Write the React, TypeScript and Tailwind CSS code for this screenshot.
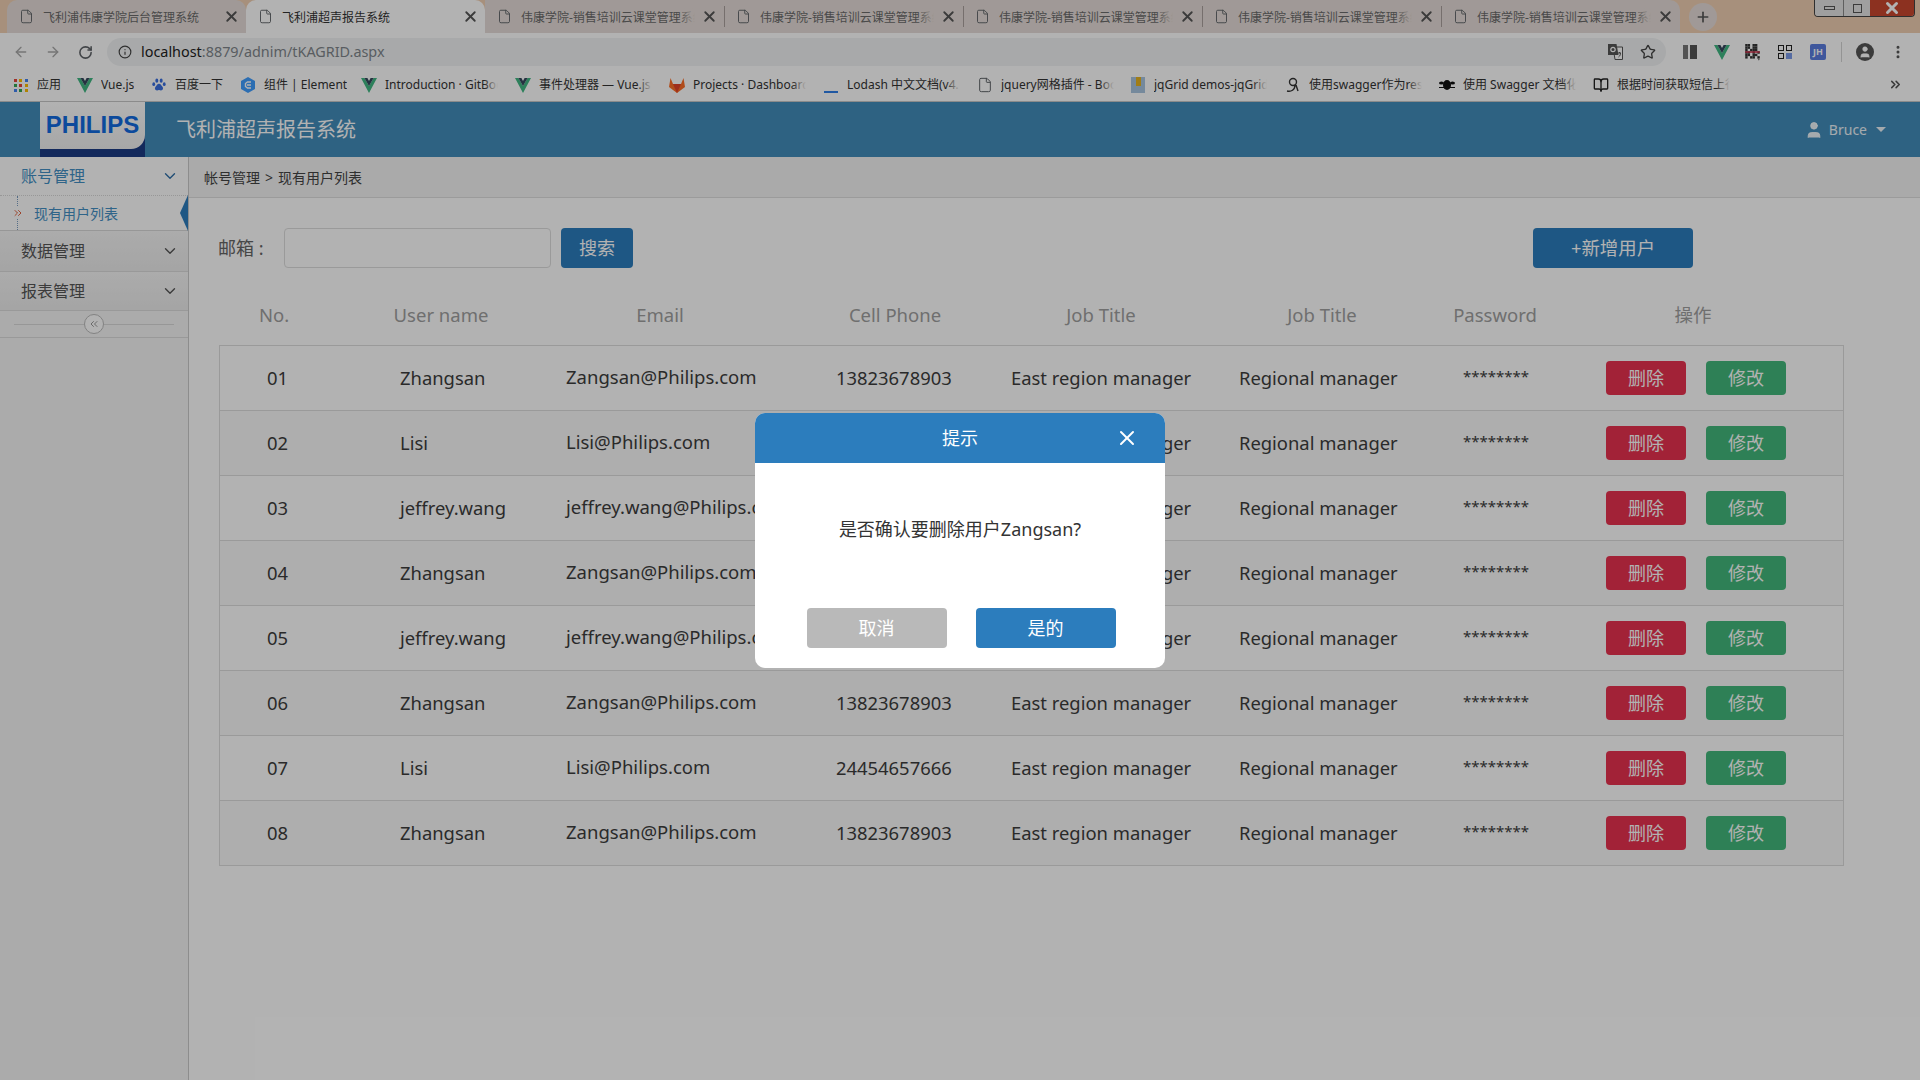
import React from 'react';
import { ArrowLeft, ArrowRight, ChevronDown, ChevronsLeft, ChevronsRight, File, Info, MoreVertical, Plus, RotateCw, Star, User, X, BookOpen } from 'lucide-react';

const font = { fontFamily: '"Noto Sans", "Noto Sans CJK SC", sans-serif' };

const users = [
  ['01', 'Zhangsan', 'Zangsan@Philips.com', '13823678903'],
  ['02', 'Lisi', 'Lisi@Philips.com', '24454657666'],
  ['03', 'jeffrey.wang', 'jeffrey.wang@Philips.com', '13823678903'],
  ['04', 'Zhangsan', 'Zangsan@Philips.com', '13823678903'],
  ['05', 'jeffrey.wang', 'jeffrey.wang@Philips.com', '13823678903'],
  ['06', 'Zhangsan', 'Zangsan@Philips.com', '13823678903'],
  ['07', 'Lisi', 'Lisi@Philips.com', '24454657666'],
  ['08', 'Zhangsan', 'Zangsan@Philips.com', '13823678903'],
];

const tabs = ['飞利浦伟康学院后台管理系统', '飞利浦超声报告系统', '伟康学院-销售培训云课堂管理系统', '伟康学院-销售培训云课堂管理系统', '伟康学院-销售培训云课堂管理系统', '伟康学院-销售培训云课堂管理系统', '伟康学院-销售培训云课堂管理系统'];

const VueIcon = () => (
  <svg width="16" height="15" viewBox="0 0 16 15" className="shrink-0">
    <path d="M0 0h3.4L8 8l4.6-8H16L8 15z" fill="#41b883" />
    <path d="M3.4 0h3L8 3l1.6-3h3L8 8z" fill="#35495e" />
  </svg>
);

const AppsIcon = () => (
  <div className="grid grid-cols-3 gap-[2px] w-[14px] shrink-0">
    {['#e8453c', '#fbbc05', '#4285f4', '#34a853', '#e8453c', '#fbbc05', '#4285f4', '#34a853', '#fbbc05'].map((c, i) => (
      <span key={i} className="w-[3px] h-[3px]" style={{ backgroundColor: c }} />
    ))}
  </div>
);

const PawIcon = () => (
  <svg width="14" height="16" viewBox="0 0 16 16" className="shrink-0" fill="#3a6fe0">
    <ellipse cx="5.5" cy="3" rx="1.7" ry="2.4" />
    <ellipse cx="10.5" cy="3" rx="1.7" ry="2.4" />
    <ellipse cx="2" cy="7" rx="1.6" ry="2.2" />
    <ellipse cx="14" cy="7" rx="1.6" ry="2.2" />
    <path d="M8 6.5c-2 0-2.5 2-4 3.5-1.5 2 0 4.500 2 4.200 1-.2 1.300-.5 2-.5s1 .3 2 .5c2 .3 3.500-2.200 2-4.200C10.500 8.500 10 6.500 8 6.500z" />
  </svg>
);

const ElementIcon = () => (
  <svg width="14" height="16" viewBox="0 0 14 16" className="shrink-0">
    <path d="M7 0l7 4v8l-7 4-7-4V4z" fill="#409eff" />
    <path d="M10 5H6.500L4.500 6.500v3L6.500 11H10M6 8h4" stroke="#fff" strokeWidth="1.400" fill="none" />
  </svg>
);

const GitlabIcon = () => (
  <svg width="16" height="15" viewBox="0 0 16 15" className="shrink-0">
    <path d="M8 15L0 9l1.500-9L4 6h8l2.500-6L16 9z" fill="#fc6d26" />
    <path d="M8 15L4 6h8z" fill="#e24329" />
  </svg>
);

const LineIcon = () => <div className="w-[14px] h-[2px] bg-[#2f7fe8] mt-[13px] shrink-0" />;
const FileIcon = () => <File className="w-[16px] h-[16px] text-[#5f6368] shrink-0" strokeWidth={1.500} />;
const JqIcon = () => (
  <div className="w-[14px] h-[16px] bg-[#a8c4e0] flex justify-center shrink-0">
    <div className="w-[5px] h-[9px] bg-[#e6b422]" />
  </div>
);
const SwaggerIcon = () => (
  <svg width="16" height="16" viewBox="0 0 16 16" fill="none" stroke="#333" strokeWidth="1.400" className="shrink-0">
    <circle cx="8" cy="5" r="3.500" />
    <path d="M2 14c4 1 8-1 8-6M11 8l2 6" />
  </svg>
);
const BeeIcon = () => (
  <svg width="16" height="12" viewBox="0 0 16 12" fill="#111" className="shrink-0">
    <ellipse cx="8" cy="6" rx="4" ry="5" />
    <ellipse cx="2.500" cy="4" rx="2.500" ry="1.500" />
    <ellipse cx="13.500" cy="4" rx="2.500" ry="1.500" />
    <path d="M0 8h16v1H0z" />
  </svg>
);
const ManualIcon = () => <BookOpen className="w-[16px] h-[16px] text-[#222] shrink-0" strokeWidth={2} />;

const TranslateIcon = () => (
  <svg width="15" height="16" viewBox="0 0 15 16" className="ml-auto shrink-0">
    <path d="M5 3h9.500v12.500H7z" fill="#fff" stroke="#555" />
    <path d="M0 0h8.500l2 11H0z" fill="#555" />
    <circle cx="5" cy="5.500" r="2.200" fill="none" stroke="#fff" strokeWidth="1.200" />
    <path d="M10 9h3M11.500 8v1M10.500 13c1.500-1 2-2.500 2-4" stroke="#555" strokeWidth="1" fill="none" />
  </svg>
);

const qrCells = [1, 1, 0, 1, 1, 0, 1, 1, 0, 1, 1, 0, 1, 0, 1, 1, 1, 0, 1, 1, 0, 1, 0, 1, 1, 1, 0, 1, 1, 0, 1, 0, 1, 1, 0, 1];

const QrIcon = () => (
  <svg width="15" height="17" viewBox="0 0 12 14" className="shrink-0">
    {qrCells.map((on, i) => on ? <rect key={i} x={(i % 6) * 2} y={Math.floor(i / 6) * 2} width="2" height="2" fill="#333" /> : null)}
    <rect y="6" width="12" height="1.200" fill="#d0304a" />
    <path d="M10 11l2 2-1 .5z" fill="#666" />
  </svg>
);

const bookmarks: { w: string; clip: boolean; icon: React.ReactNode; label: string }[] = [
  { w: 'w-[64px]', clip: false, icon: <AppsIcon />, label: '应用' },
  { w: 'w-[74px]', clip: false, icon: <VueIcon />, label: 'Vue.js' },
  { w: 'w-[89px]', clip: false, icon: <PawIcon />, label: '百度一下' },
  { w: 'w-[121px]', clip: false, icon: <ElementIcon />, label: '组件 | Element' },
  { w: 'w-[154px]', clip: true, icon: <VueIcon />, label: 'Introduction · GitBook' },
  { w: 'w-[154px]', clip: true, icon: <VueIcon />, label: '事件处理器 — Vue.js' },
  { w: 'w-[154px]', clip: true, icon: <GitlabIcon />, label: 'Projects · Dashboard' },
  { w: 'w-[154px]', clip: true, icon: <LineIcon />, label: 'Lodash 中文文档(v4.16)' },
  { w: 'w-[153px]', clip: true, icon: <FileIcon />, label: 'jquery网格插件 - Bootstrap' },
  { w: 'w-[155px]', clip: true, icon: <JqIcon />, label: 'jqGrid demos-jqGrid' },
  { w: 'w-[154px]', clip: true, icon: <SwaggerIcon />, label: '使用swagger作为restful' },
  { w: 'w-[154px]', clip: true, icon: <BeeIcon />, label: '使用 Swagger 文档化' },
  { w: 'w-[154px]', clip: true, icon: <ManualIcon />, label: '根据时间获取短信上行记录' },
];

const BrowserChrome = () => (
  <div className="shrink-0">
    {/* tab strip */}
    <div className="relative h-[33px] bg-[#f0cfb2] flex pl-[7px] overflow-hidden">
      {tabs.map((t, i) => (
        <div
          key={i}
          className={`relative w-[239px] h-[33px] flex items-center pl-[12px] text-[12px] ${i === 1 ? 'bg-white rounded-t-[10px] text-[#333]' : 'bg-[#e5dcd8] text-[#6a6a6a]'} ${i === 0 ? 'rounded-t-[10px]' : ''} ${i === 6 ? 'rounded-tr-[10px]' : ''}`}
        >
          <File className="w-[15px] h-[15px] text-[#5f6368] shrink-0" strokeWidth={1.500} />
          <div className="relative ml-[9px] w-[174px] overflow-hidden pt-[2px]">
            <span className="whitespace-nowrap">{t}</span>
            {i > 1 && <div className="absolute right-0 top-0 bottom-0 w-[16px] bg-gradient-to-r from-transparent to-[#e5dcd8]" />}
          </div>
          <X className="w-[17px] h-[17px] ml-[6px] text-[#555] shrink-0" strokeWidth={2.600} />
          {i > 2 && <div className="absolute left-0 top-[6px] h-[21px] w-px bg-[#a9a09c]" />}
        </div>
      ))}
      <div className="ml-[9px] mt-[3px] w-[28px] h-[28px] rounded-full bg-[#e5dcd8] flex items-center justify-center">
        <Plus className="w-[16px] h-[16px] text-[#555]" strokeWidth={2.500} />
      </div>
      <div className="absolute right-[5px] top-0 w-[101px] h-[17px] flex rounded-b-[4px] overflow-hidden border border-t-0 border-[#444]">
        <div className="w-[28px] bg-[#e4e4e4] flex items-center justify-center">
          <div className="w-[11px] h-[4px] border border-[#555]" />
        </div>
        <div className="w-[27px] bg-[#e4e4e4] border-l border-[#888] flex items-center justify-center">
          <div className="w-[9px] h-[9px] border border-[#555]" />
        </div>
        <div className="flex-1 bg-[#c9472e] flex items-center justify-center">
          <X className="w-[18px] h-[18px] text-white" strokeWidth={4} />
        </div>
      </div>
    </div>
    {/* address bar */}
    <div className="h-[34px] pt-[4px] bg-white flex items-center text-[#5f6368]">
      <ArrowLeft className="ml-[13px] w-[16px] h-[16px] text-[#a8a8a8]" strokeWidth={2} />
      <ArrowRight className="ml-[16px] w-[16px] h-[16px] text-[#a8a8a8]" strokeWidth={2} />
      <RotateCw className="ml-[17px] w-[15px] h-[15px] text-[#5f6368]" strokeWidth={2.500} />
      <div className="ml-[14px] w-[1559px] h-[28px] rounded-full bg-[#f1f3f4] flex items-center pl-[11px]">
        <Info className="w-[14px] h-[14px] text-[#444]" strokeWidth={2} />
        <span className="ml-[9px] text-[14.400px] text-[#222]">localhost<span className="text-[#80868b]">:8879/adnim/tKAGRID.aspx</span></span>
        <TranslateIcon />
        <Star className="ml-[17px] mr-[10px] w-[16px] h-[16px] text-[#444]" strokeWidth={2} />
      </div>
      <div className="ml-[17px] flex gap-[2px] w-[14px] h-[14px] shrink-0">
        <div className="w-[5px] bg-[#777]" />
        <div className="w-[8px] bg-[#555]" />
      </div>
      <div className="ml-[17px]"><VueIcon /></div>
      <div className="ml-[15px]"><QrIcon /></div>
      <div className="ml-[18px] grid grid-cols-2 gap-[2px] w-[14px] shrink-0">
        <span className="w-[6px] h-[6px] border border-[#222]" />
        <span className="w-[6px] h-[6px] border border-[#222]" />
        <span className="w-[6px] h-[6px] border border-[#222]" />
        <span className="w-[6px] h-[6px] bg-[#7c9be8]" />
      </div>
      <div className="ml-[18px] w-[16px] h-[16px] rounded-[2px] bg-[#5b7de0] text-white text-[9px] font-bold flex items-center justify-center">JH</div>
      <div className="ml-[15px] h-[20px] w-px bg-[#d5d5d5]" />
      <div className="ml-[14px] w-[18px] h-[18px] rounded-full bg-[#555] flex items-center justify-center shrink-0">
        <User className="w-[14px] h-[14px] text-white" fill="white" strokeWidth={1} />
      </div>
      <MoreVertical className="ml-[16px] w-[16px] h-[16px] text-[#555]" strokeWidth={2.500} />
    </div>
    {/* bookmarks */}
    <div className="relative h-[35px] pt-[2px] bg-white border-b border-[#c8c8c8] flex items-center pl-[13px] text-[12px] text-[#333]">
      {bookmarks.map((b) => (
        <div key={b.label} className={`${b.w} shrink-0 flex items-center`}>
          <div className="w-[16px] flex justify-center shrink-0">{b.icon}</div>
          <div className={`relative ml-[8px] overflow-hidden whitespace-nowrap ${b.clip ? 'w-[113px]' : ''}`}>
            {b.label}
            {b.clip && <div className="absolute right-0 top-0 bottom-0 w-[14px] bg-gradient-to-r from-transparent to-white" />}
          </div>
        </div>
      ))}
      <ChevronsRight className="absolute right-[17px] top-[10px] w-[15px] h-[15px] text-[#555]" strokeWidth={2.500} />
    </div>
  </div>
);

const AppHeader = () => (
  <div className="shrink-0 h-[55px] bg-[#438dbb] flex items-stretch">
    <div className="ml-[40px] w-[105px] bg-[#1c3c84]">
      <div className="h-[47px] bg-gradient-to-b from-white to-[#f0f0f0] rounded-br-[14px] flex justify-center">
        <span className="mt-[7px] text-[#126be0] text-[24px] leading-[32px] font-bold" style={{ fontFamily: '"Liberation Sans", sans-serif' }}>PHILIPS</span>
      </div>
    </div>
    <div className="ml-[31px] self-center text-[20px] text-white">飞利浦超声报告系统</div>
    <div className="ml-auto mr-[34px] self-center flex items-center text-[14px] text-white/90">
      <User className="w-[20px] h-[20px] -mx-[3px]" fill="currentColor" strokeWidth={1} />
      <span className="ml-[8px]">Bruce</span>
      <div className="ml-[9px] w-0 h-0 border-x-[5px] border-x-transparent border-t-[5px] border-t-white/90" />
    </div>
  </div>
);

const Sidebar = () => (
  <div className="shrink-0 w-[189px] border-r border-[#cbcbcb] bg-[#f5f5f5] flex flex-col">
    <div className="h-[38px] bg-white flex items-center pl-[21px] pr-[9px] text-[16px] text-[#4490c4]">
      <span>账号管理</span>
      <ChevronDown className="ml-auto w-[18px] h-[18px] text-[#2f6fa8]" strokeWidth={1.800} />
    </div>
    <div className="relative h-[36px] bg-white border-y border-[#d8d8d8] [border-top-style:dotted] flex items-center pl-[34px] text-[14px] text-[#4490c4]">
      <div className="absolute left-[17px] top-0 bottom-0 border-l border-dotted border-[#7a9cc0]" />
      <div className="absolute left-[12px] top-[11px] bg-white">
        <ChevronsRight className="w-[12px] h-[12px] text-[#e0623f]" strokeWidth={2} />
      </div>
      <span>现有用户列表</span>
      <div className="absolute right-0 top-[-1px] bottom-[-1px] w-[8px] bg-[#2d7dbd] [clip-path:polygon(100%_0,100%_100%,0_50%)]" />
    </div>
    <div className="h-[41px] bg-gradient-to-b from-[#f6f6f6] to-[#ececec] border-b border-[#dcdcdc] flex items-center pl-[21px] pr-[9px] text-[16px] text-[#555]">
      <span>数据管理</span>
      <ChevronDown className="ml-auto w-[18px] h-[18px] text-[#555]" strokeWidth={1.800} />
    </div>
    <div className="h-[39px] bg-gradient-to-b from-[#f6f6f6] to-[#ececec] border-b border-[#dcdcdc] flex items-center pl-[21px] pr-[9px] text-[16px] text-[#555]">
      <span>报表管理</span>
      <ChevronDown className="ml-auto w-[18px] h-[18px] text-[#555]" strokeWidth={1.800} />
    </div>
    <div className="relative h-[27px] border-b border-[#dcdcdc] flex items-center justify-center">
      <div className="w-[160px] h-px bg-[#d8d8d8]" />
      <div className="absolute left-[84px] top-[3px] w-[20px] h-[20px] rounded-full bg-white border border-[#bbb] flex items-center justify-center">
        <ChevronsLeft className="w-[12px] h-[12px] text-[#999]" strokeWidth={2} />
      </div>
    </div>
  </div>
);

const UserRow = ({ user, striped }: { user: string[]; striped: boolean }) => (
  <div className={`h-[65px] border-b border-[#dddddd] grid grid-cols-[180px_166px_270px_175px_228px_224px_143px_1fr] items-center text-[18.400px] text-[#3d3d3d] ${striped ? 'bg-[#f9f9f9]' : ''}`}>
    <div className="pl-[47px]">{user[0]}</div>
    <div>{user[1]}</div>
    <div className="pb-[2px] whitespace-nowrap text-[18.500px]">{user[2]}</div>
    <div>{user[3]}</div>
    <div>East region manager</div>
    <div>Regional manager</div>
    <div className="pb-[4px] text-[15px]">********</div>
    <div className="flex gap-[20px]">
      <button className="w-[80px] h-[34px] rounded-[4px] bg-[#e9324f] text-white text-[18px]">删除</button>
      <button className="w-[80px] h-[34px] rounded-[4px] bg-[#43b87b] text-white text-[18px]">修改</button>
    </div>
  </div>
);

const ConfirmModal = () => (
  <div className="absolute inset-0 bg-black/30">
    <div className="absolute left-[755px] top-[413px] w-[410px] h-[255px] rounded-[10px] bg-white overflow-hidden flex flex-col">
      <div className="relative h-[50px] bg-[#2c7dbd] flex items-center justify-center text-[18px] text-white">
        提示
        <X className="absolute right-[26px] top-[13px] w-[24px] h-[24px]" strokeWidth={2} />
      </div>
      <div className="mt-[53px] text-center text-[18px] text-[#333]">是否确认要删除用户Zangsan?</div>
      <div className="mt-[65px] pl-[2px] flex justify-center gap-[29px]">
        <button className="w-[140px] h-[40px] rounded-[4px] bg-[#b9b9b9] text-white text-[18px]">取消</button>
        <button className="w-[140px] h-[40px] rounded-[4px] bg-[#2c7dbd] text-white text-[18px]">是的</button>
      </div>
    </div>
  </div>
);

export default function App() {
  return (
    <div className="relative w-[1920px] h-[1080px] overflow-hidden bg-white flex flex-col" style={font}>
      <BrowserChrome />
      <AppHeader />
      <div className="flex flex-1 min-h-0">
        <Sidebar />
        <div className="flex-1 min-w-0 bg-white">
          <div className="h-[41px] bg-[#f4f4f4] border-b border-[#dedede] flex items-center pl-[15px] text-[14px] text-[#444]">
            帐号管理<span className="mx-[5px]">&gt;</span>现有用户列表
          </div>
          <div className="ml-[29px] mt-[30px] w-[1475px] flex items-center">
            <span className="w-[66px] mt-[1px] text-[18px] text-[#666]">邮箱 :</span>
            <input className="w-[267px] h-[40px] border border-[#dddddd] rounded-[4px]" />
            <button className="ml-[10px] w-[72px] h-[40px] rounded-[4px] bg-[#2c7dbd] text-white text-[18px]">搜索</button>
            <button className="ml-auto w-[160px] h-[40px] rounded-[4px] bg-[#2c7dbd] text-white text-[18.400px]">+新增用户</button>
          </div>
          <div className="ml-[30px] mt-[16px] h-[61px] w-[1642px] grid grid-cols-[110px_224px_214px_256px_156px_286px_60px_336px] items-center text-center text-[18.500px] text-[#a0a0a0]">
            <div>No.</div>
            <div>User name</div>
            <div>Email</div>
            <div>Cell Phone</div>
            <div>Job Title</div>
            <div>Job Title</div>
            <div className="whitespace-nowrap flex justify-center">Password</div>
            <div>操作</div>
          </div>
          <div className="ml-[30px] w-[1625px] border border-b-0 border-[#dddddd]">
            {users.map((u, i) => (
              <UserRow key={u[0]} user={u} striped={i % 2 === 1} />
            ))}
          </div>
        </div>
      </div>
      <ConfirmModal />
    </div>
  );
}
